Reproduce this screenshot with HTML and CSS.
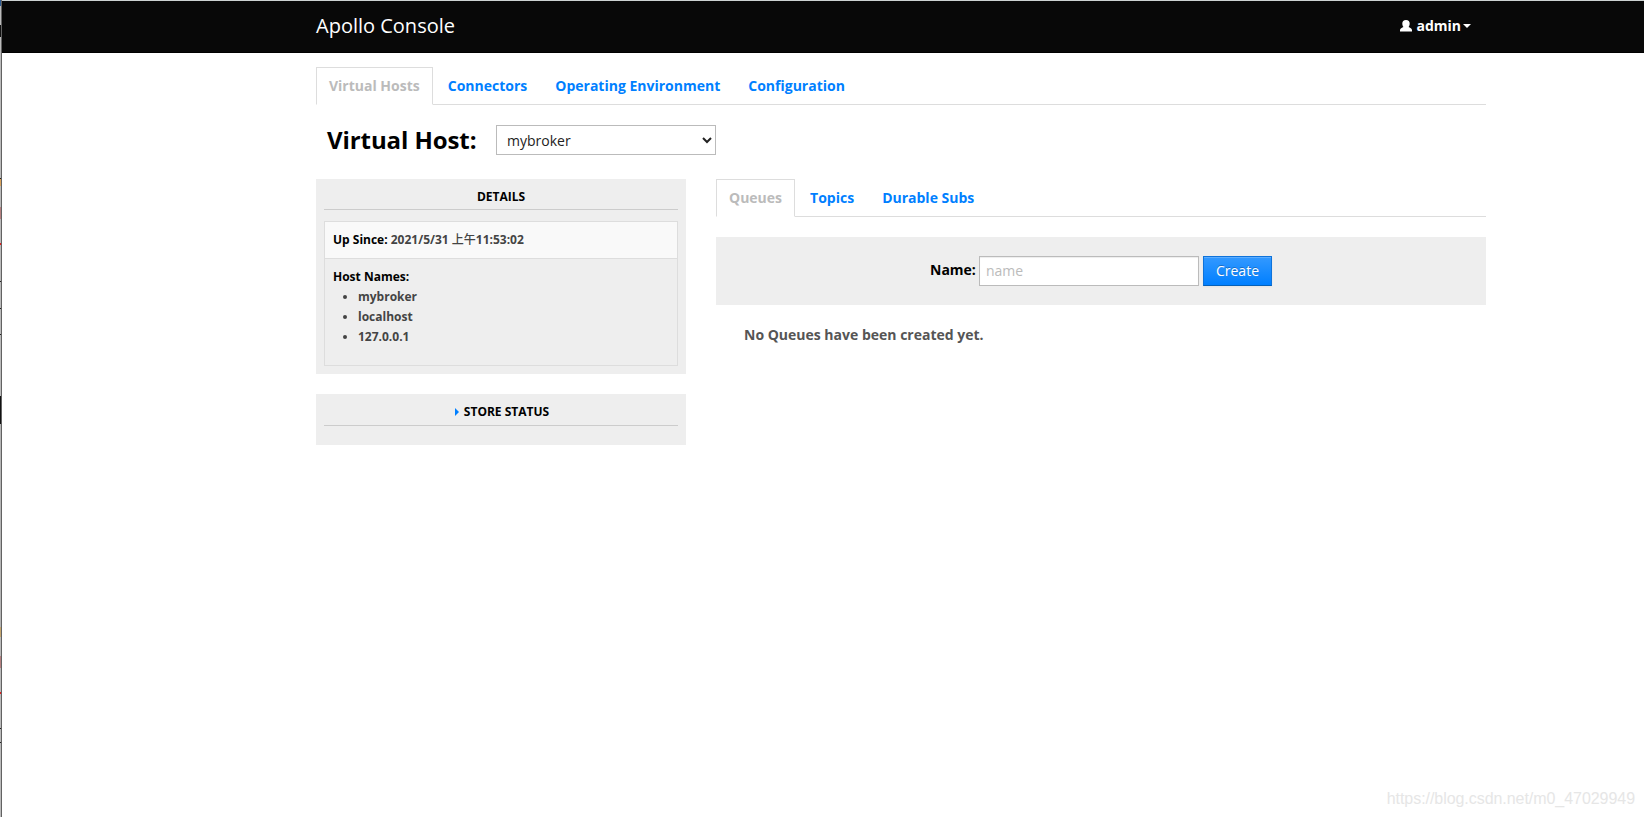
FILE: index.html
```html
<!DOCTYPE html>
<html lang="en">
<head>
    <meta charset="UTF-8">
    <title>Apollo Console</title>
    <link rel="stylesheet" href="styles.css">
</head>

<body>
    <div class="edge"></div>
    <div class="page">
        <!-- Top bar -->
        <div class="navbar">
            <div class="container navbar-inner">
                <a class="brand" href="#">Apollo Console</a>
                <a class="user" href="#">
                    <svg class="icon-user" width="12" height="12" viewBox="0 0 12 12"><path fill="#fff" d="M6 0C3.500 0 2.300 1.400 2.300 3.400c0 1.500.5 2.800 1.200 3.600C2 8 0 8 0 10.200V11.500h12v-1.300C12 8 10 8 8.500 7c.7-.8 1.200-2.100 1.200-3.600C9.700 1.400 8.500 0 6 0z"/></svg>
                    <span>admin</span><b class="caret"></b>
                </a>
            </div>
        </div>

        <div class="container">
            <ul class="tabs main-tabs">
                <li class="active"><a href="#">Virtual Hosts</a></li>
                <li><a href="#">Connectors</a></li>
                <li><a href="#">Operating Environment</a></li>
                <li><a href="#">Configuration</a></li>
            </ul>

            <div class="host-picker">
                <h2>Virtual Host:</h2>
                <select>
                    <option>mybroker</option>
                </select>
            </div>

            <div class="row">
                <!-- Left column -->
                <div class="sidebar">
                    <div class="well details">
                        <h6>Details</h6>
                        <div class="table">
                            <div class="cell odd"><strong>Up Since:</strong> 2021/5/31 <span class="cjk">上午</span>11:53:02</div>
                            <div class="cell">
                                <strong>Host Names:</strong>
                                <ul>
                                    <li>mybroker</li>
                                    <li>localhost</li>
                                    <li>127.0.0.1</li>
                                </ul>
                            </div>
                        </div>
                    </div>
                    <div class="well store">
                        <h6><i class="arrow"></i>Store Status</h6>
                    </div>
                </div>

                <!-- Right column -->
                <div class="content">
                    <ul class="tabs">
                        <li class="active"><a href="#">Queues</a></li>
                        <li><a href="#">Topics</a></li>
                        <li><a href="#">Durable Subs</a></li>
                    </ul>
                    <form class="create-form">
                        <label for="name">Name:</label>
                        <input type="text" id="name" placeholder="name">
                        <button type="button">Create</button>
                    </form>
                    <p class="empty">No Queues have been created yet.</p>
                </div>
            </div>
        </div>
    </div>
    <div class="watermark">https://blog.csdn.net/m0_47029949</div>
</body>
</html>
```
FILE: styles.css
```css
* {
    box-sizing: border-box;
}

body {
    margin: 0;
    display: flex;
    height: 817px;
    overflow: hidden;
    background: #fff;
    color: #555;
    font: 700 14px/20px "Open Sans", "Noto Sans CJK SC", sans-serif;
}

a {
    color: #007fff;
    text-decoration: none;
}

ul {
    margin: 0;
    padding: 0;
}

/* Window edge */
.edge {
    width: 2px;
    border-right: 1px solid #626262;
    background: linear-gradient(#2d5c94 0 6px, #bbb 6px 25px, #111 25px 37px, #bbb 37px 178px, #222 178px 179px, #d9a35c 179px 186px, #bbb 186px 207px, #b58080 207px 219px, #bbb 219px 243px, #e02020 243px 245px, #bbb 245px 281px, #222 281px 282px, #bbb 282px 308px, #222 308px 309px, #bbb 309px 334px, #222 334px 335px, #bbb 335px 396px, #111 396px 424px, #b5b5b5 424px 627px, #c5a66f 627px 637px, #bbb 637px 656px, #b58080 656px 668px, #bbb 668px 692px, #e02020 692px 694px, #bbb 694px 728px, #222 728px 729px, #bbb 729px 742px, #222 742px 743px, #bbb 743px);
}

.page {
    flex: 1;
    border-top: 1px solid #ccd2d2;
}

.container {
    width: 1170px;
    margin: 0 auto 0 314px;
}

/* Top bar */
.navbar {
    height: 52px;
    background: #080808;
    border-bottom: 1px solid #000;
}

.navbar-inner {
    display: flex;
    justify-content: space-between;
    padding: 15px 15px 0 0;
}

.brand {
    color: #fff;
    font-size: 20px;
    font-weight: 400;
}

.user {
    display: flex;
    align-items: center;
    color: #fff;
}

.icon-user {
    margin-right: 4px;
}

.caret {
    margin-left: 2px;
    border-top: 4px solid #fff;
    border-left: 4px solid transparent;
    border-right: 4px solid transparent;
}

/* Tabs */
.tabs {
    display: flex;
    list-style: none;
    height: 38px;
    border-bottom: 1px solid #ddd;
}

.tabs li {
    height: 38px;
    margin-right: 2px;
}

.tabs a {
    display: block;
    height: 38px;
    padding: 8px 12px 0;
    border: 1px solid transparent;
}

.tabs .active a {
    color: #bbb;
    background: #fff;
    border-color: #ddd #ddd #fff;
}

.main-tabs {
    margin-top: 14px;
}

.host-picker {
    display: flex;
    padding: 20px 0 0 11px;
    height: 74px;
}

h2 {
    width: 169px;
    margin: 0;
    color: #000;
    font-size: 24px;
    line-height: 30px;
    letter-spacing: -0.08px;
}

select, input {
    width: 220px;
    height: 30px;
    border: 1px solid #bbb;
    border-radius: 0;
    background: #fff;
    color: #222;
    font: 400 14px/20px "Open Sans", sans-serif;
}

select {
    padding: 4px 6px;
}

.row {
    display: flex;
    gap: 30px;
}

/* Left column */
.sidebar {
    width: 370px;
}

.well {
    padding: 8px;
    background: #eee;
}

.details {
    height: 195px;
    margin-bottom: 20px;
}

.store {
    height: 51px;
}

h6 {
    display: flex;
    justify-content: center;
    align-items: center;
    height: 23px;
    margin: 0 0 11px;
    padding-bottom: 3px;
    border-bottom: 1px solid #ccc;
    color: #000;
    font-size: 12px;
    text-transform: uppercase;
}

.store h6 {
    height: 24px;
    padding: 0 0 4px 2px;
}

.arrow {
    margin-right: 5px;
    border-left: 4px solid #007fff;
    border-top: 4px solid transparent;
    border-bottom: 4px solid transparent;
}

.table {
    border: 1px solid #ddd;
    font-size: 12px;
    color: #444;
}

.table strong {
    color: #000;
    font-weight: 700;
}

.cjk {
    font-weight: 500;
}

.cell {
    height: 106px;
    padding: 8px;
}

.cell.odd {
    height: 37px;
    background: #f9f9f9;
    border-bottom: 1px solid #ddd;
}

.cell ul {
    padding-left: 25px;
}

/* Right column */
.content {
    width: 770px;
}

.create-form {
    display: flex;
    justify-content: center;
    height: 68px;
    margin-top: 20px;
    padding-top: 19px;
    background: #eee;
}

.create-form label {
    width: 45px;
    margin-right: 4px;
    padding-top: 4px;
    color: #000;
}

.create-form input {
    padding: 3px 6px 5px;
    box-shadow: inset 0 1px 1px rgba(0, 0, 0, 0.075);
}

.create-form input::placeholder {
    color: #bbb;
}

.create-form button {
    width: 69px;
    height: 30px;
    margin-left: 4px;
    padding: 0;
    border: 1px solid #0f73da;
    border-bottom-color: #0560b8;
    background: linear-gradient(#3399ff, #007fff);
    box-shadow: inset 0 1px 0 rgba(255, 255, 255, 0.2), 0 1px 2px rgba(0, 0, 0, 0.05);
    color: #fff;
    font: 400 14px/20px "Open Sans", sans-serif;
    text-shadow: 0 -1px 0 rgba(0, 0, 0, 0.25);
}

.empty {
    margin: 20px 0 0 28px;
}

.watermark {
    position: absolute;
    right: 9px;
    bottom: 8px;
    color: #e6e6e6;
    font: 400 16px/20px "Liberation Sans", sans-serif;
    letter-spacing: -0.05px;
}
```
